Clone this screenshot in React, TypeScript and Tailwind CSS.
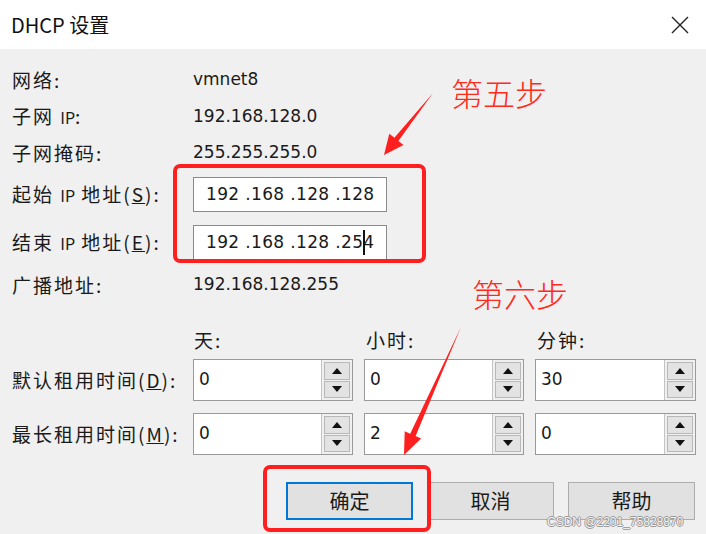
import React from "react";

const latin = "font-['DejaVu_Sans','Noto_Sans_CJK_SC',sans-serif]";
const cjk = "font-['Noto_Sans_CJK_SC','DejaVu_Sans',sans-serif]";

function Label({ children }: { children: React.ReactNode }) {
  return (
    <div className={`w-[181px] shrink-0 text-[19px] tracking-[2px] text-[#1a1a1a] ${cjk}`}>{children}</div>
  );
}

function Value({ children }: { children: React.ReactNode }) {
  return <div className={`text-[17px] text-[#1a1a1a] ${latin}`}>{children}</div>;
}

function Tri({ up }: { up: boolean }) {
  return (
    <svg width="10" height="6" viewBox="0 0 10 6">
      {up ? <polygon points="0,6 10,6 5,0" fill="#111" /> : <polygon points="0,0 10,0 5,6" fill="#111" />}
    </svg>
  );
}

function Spin({ value, w }: { value: string; w: string }) {
  return (
    <div className={`${w} h-[42px] flex border border-[#9a9a9a] bg-white`}>
      <div className={`flex-1 pl-[5px] pt-[7px] text-[17px] text-[#1a1a1a] ${latin}`}>{value}</div>
      <div className="w-[31px] flex flex-col gap-px p-[2px] bg-[#f0f0f0] border-l border-[#c4c4c4]">
        <div className="flex-1 flex items-center justify-center bg-[#e3e3e3] border border-[#b8b8b8]">
          <Tri up />
        </div>
        <div className="flex-1 flex items-center justify-center bg-[#e3e3e3] border border-[#b8b8b8]">
          <Tri up={false} />
        </div>
      </div>
    </div>
  );
}

function Btn({ children, primary }: { children: React.ReactNode; primary?: boolean }) {
  return (
    <div
      className={`w-[127px] h-[38px] flex items-center justify-center bg-[#e1e1e1] text-[20px] text-[#1a1a1a] ${cjk} ${
        primary ? "border-2 border-[#0078d7]" : "border border-[#adadad]"
      }`}
    >
      {children}
    </div>
  );
}

export default function App() {
  return (
    <div className="relative w-[706px] h-[534px] overflow-hidden bg-[#f0f0f0]">
      <div className="h-[49px] bg-white flex items-center justify-between pl-[11px] pr-[17px]">
        <div className={`text-[20px] text-[#111] ${cjk}`}>DHCP 设置</div>
        <svg width="18" height="18" viewBox="0 0 18 18">
          <path d="M1 1 L17 17 M17 1 L1 17" stroke="#222" strokeWidth="1.4" fill="none" />
        </svg>
      </div>

      <div className="pl-[12px] pt-[13px] flex flex-col">
        <div className="h-[36px] flex items-center">
          <Label>网络:</Label>
          <Value>vmnet8</Value>
        </div>
        <div className="h-[37px] flex items-center">
          <Label>子网 <span className="text-[16px] tracking-normal">IP</span>:</Label>
          <Value>192.168.128.0</Value>
        </div>
        <div className="h-[36px] flex items-center">
          <Label>子网掩码:</Label>
          <Value>255.255.255.0</Value>
        </div>
        <div className="h-[47px] flex items-center">
          <Label>
            起始 <span className="text-[16px] tracking-normal">IP</span> 地址(<span className="underline">S</span>):
          </Label>
          <div className={`w-[194px] h-[35px] border border-[#8a8a8a] bg-white pl-[12px] flex items-center text-[17px] tracking-[0.35px] text-[#1a1a1a] whitespace-pre ${latin}`}>
            192 .168 .128 .128
          </div>
        </div>
        <div className="h-[49px] flex items-center">
          <Label>
            结束 <span className="text-[16px] tracking-normal">IP</span> 地址(<span className="underline">E</span>):
          </Label>
          <div className={`w-[194px] h-[35px] border border-[#8a8a8a] bg-white pl-[12px] flex items-center text-[17px] tracking-[0.35px] text-[#1a1a1a] whitespace-pre ${latin}`}>
            192 .168 .128 .25<span className="inline-block w-[1.5px] h-[25px] bg-[#111] -mr-[1.5px] relative z-10" />4
          </div>
        </div>
        <div className="h-[36px] flex items-center">
          <Label>广播地址:</Label>
          <Value>192.168.128.255</Value>
        </div>

        <div className={`mt-[19px] h-[36px] flex items-center text-[19px] tracking-[2px] text-[#1a1a1a] ${cjk}`}>
          <div className="w-[182px] shrink-0" />
          <div className="w-[172px]">天:</div>
          <div className="w-[171px]">小时:</div>
          <div>分钟:</div>
        </div>
        <div className="mt-[1px] flex items-center gap-[11px]">
          <div className={`w-[170px] text-[19px] tracking-[2px] text-[#1a1a1a] ${cjk}`}>
            默认租用时间(<span className="underline">D</span>):
          </div>
          <Spin value="0" w="w-[160px]" />
          <Spin value="0" w="w-[160px]" />
          <Spin value="30" w="w-[161px]" />
        </div>
        <div className="mt-[12px] flex items-center gap-[11px]">
          <div className={`w-[170px] text-[19px] tracking-[2px] text-[#1a1a1a] ${cjk}`}>
            最长租用时间(<span className="underline">M</span>):
          </div>
          <Spin value="0" w="w-[160px]" />
          <Spin value="2" w="w-[160px]" />
          <Spin value="0" w="w-[161px]" />
        </div>

        <div className="mt-[27px] flex gap-[14px] pl-[274px]">
          <Btn primary>确定</Btn>
          <Btn>取消</Btn>
          <Btn>帮助</Btn>
        </div>
      </div>

      {/* annotations */}
      <div className="absolute left-[173px] top-[164px] w-[253px] h-[99px] border-[4px] border-[#ff1f1f] rounded-[7px] pointer-events-none" />
      <div className="absolute left-[263px] top-[465px] w-[168px] h-[67px] border-[4px] border-[#ff1f1f] rounded-[7px] pointer-events-none" />
      <div className={`absolute left-[451px] top-[70px] text-[32px] leading-[44px] font-light text-[#ff2a1a] ${cjk}`}>第五步</div>
      <div className={`absolute left-[472px] top-[271px] text-[32px] leading-[44px] font-light text-[#ff2a1a] ${cjk}`}>第六步</div>
      <svg className="absolute inset-0 pointer-events-none" width="706" height="534" viewBox="0 0 706 534">
        <polygon points="433,93 398.4,140.9 403.5,144.9 384,155 389.3,133.7 394.4,137.8" fill="#ff1f1f" />
        <polygon points="461,327 415.6,436.1 421.1,438.6 404,455 404.7,431.2 410.2,433.7" fill="#ff1f1f" />
      </svg>
      <div className="absolute left-[547px] top-[513px] text-[12px] text-[#f4f4f4] font-['Liberation_Sans',sans-serif] [text-shadow:1px_0_0_#9a9a9a,-1px_0_0_#9a9a9a,0_1px_0_#9a9a9a,0_-1px_0_#9a9a9a]">
        CSDN @2201_75828870
      </div>
    </div>
  );
}
